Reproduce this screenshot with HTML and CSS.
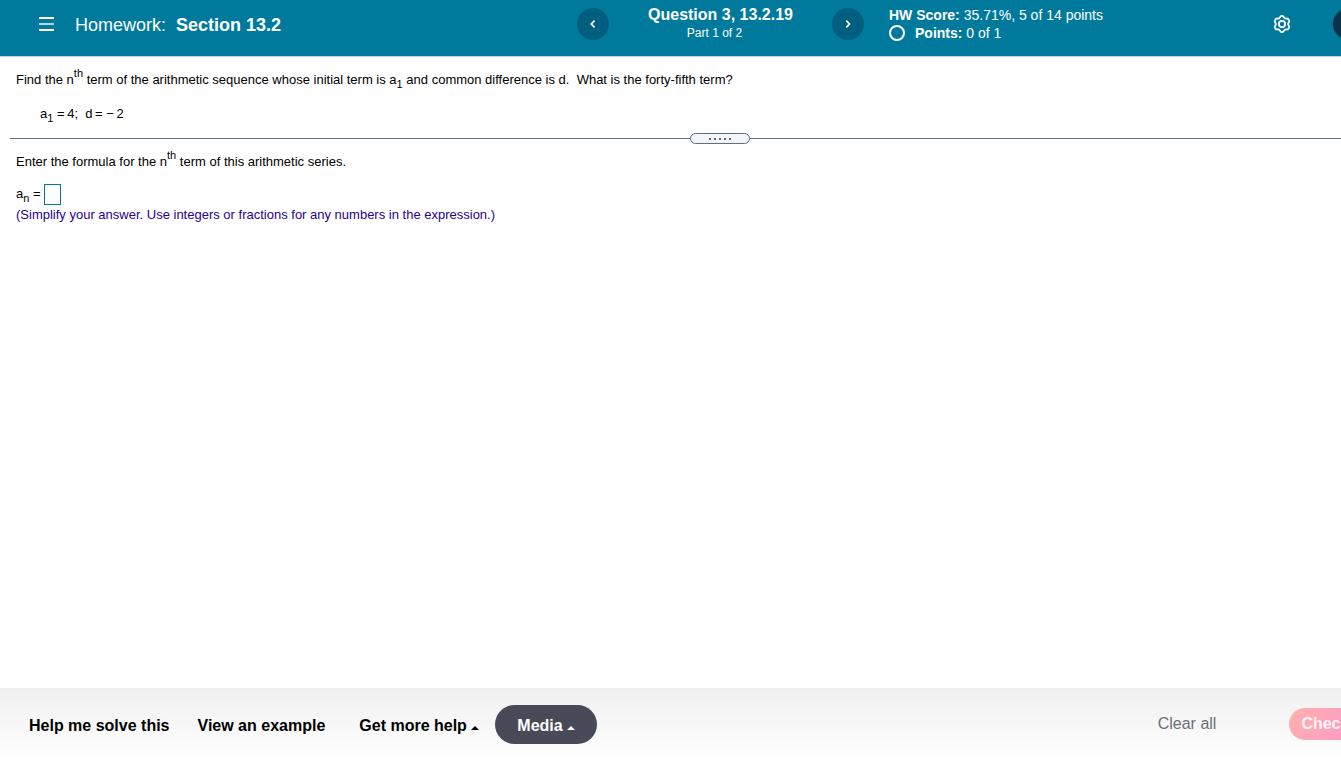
FILE: index.html
```html
<!DOCTYPE html>
<html lang="en">
<head>
  <meta charset="utf-8">
  <title>Homework: Section 13.2</title>
  <link rel="stylesheet" href="styles.css">
</head>
<body>
  <header class="header">
    <div class="title">
      <button class="icon-button menu" aria-label="Menu">
        <svg width="16" height="14" viewBox="0 0 16 14" stroke="#fff" fill="none">
          <path d="M0 1H15M0 13H15" stroke-width="2"/>
          <path d="M0 7H15" stroke-width="1.4"/>
        </svg>
      </button>
      <h1>Homework: <b>Section 13.2</b></h1>
    </div>

    <nav class="question-nav">
      <button class="round" aria-label="Previous question">
        <svg width="8" height="10" viewBox="0 0 8 10" stroke="#fff" stroke-width="1.7" fill="none"><path d="M5.5 1.7L2.3 5L5.5 8.3"/></svg>
      </button>
      <div class="question">
        <h2>Question 3, 13.2.19</h2>
        <p>Part 1 of 2</p>
      </div>
      <button class="round" aria-label="Next question">
        <svg width="8" height="10" viewBox="0 0 8 10" stroke="#fff" stroke-width="1.7" fill="none"><path d="M2.3 1.7L5.5 5L2.3 8.3"/></svg>
      </button>
    </nav>

    <div class="status">
      <div class="score">
        <p><b>HW Score:</b> 35.71%, 5 of 14 points</p>
        <p class="points"><span class="ring"></span><span><b>Points:</b> 0 of 1</span></p>
      </div>
      <button class="icon-button" aria-label="Settings">
        <svg width="20" height="20" viewBox="0 0 20 20" stroke="#fff" stroke-width="1.8" fill="none" stroke-linejoin="round">
          <path d="M10 1.8Q11.6 1.8 12.1 3.4Q12.7 4.9 14.2 4.6Q16 4.2 16.9 5.9Q17.8 7.4 16.6 8.6Q15.5 10 16.6 11.4Q17.8 12.6 16.9 14.1Q16 15.8 14.2 15.4Q12.7 15.1 12.1 16.6Q11.6 18.2 10 18.2Q8.4 18.2 7.9 16.6Q7.3 15.1 5.8 15.4Q4 15.8 3.1 14.1Q2.2 12.6 3.4 11.4Q4.5 10 3.4 8.6Q2.2 7.4 3.1 5.9Q4 4.2 5.8 4.6Q7.3 4.9 7.9 3.4Q8.4 1.8 10 1.8Z"/>
          <circle cx="10" cy="10" r="3.1"/>
        </svg>
      </button>
      <button class="round save" aria-label="Save"></button>
    </div>
  </header>

  <main class="content">
    <section class="problem">
      <p>Find the n<sup>th</sup> term of the arithmetic sequence whose initial term is a<sub>1</sub> and common difference is d.&nbsp; What is the forty-fifth term?</p>
      <p class="given">a<sub>1</sub> =&#8201;4;&nbsp; d&#8201;=&nbsp;&minus;&#8201;2</p>
    </section>

    <div class="divider">
      <button class="handle" aria-label="Resize panels"><i></i><i></i><i></i><i></i><i></i></button>
    </div>

    <section class="work">
      <p>Enter the formula for the n<sup>th</sup> term of this arithmetic series.</p>
      <div class="answer">
        <label for="answer">a<sub>n</sub> =</label>
        <input id="answer" type="text">
      </div>
      <p class="hint">(Simplify your answer. Use integers or fractions for any numbers in the expression.)</p>
    </section>
  </main>

  <footer class="footer">
    <div class="help">
      <button>Help me solve this</button>
      <button>View an example</button>
      <button class="more">Get more help <span class="caret"></span></button>
      <button class="media">Media <span class="caret"></span></button>
    </div>
    <div class="actions">
      <button class="clear">Clear all</button>
      <button class="check">Check answer</button>
    </div>
  </footer>
</body>
</html>
```
FILE: styles.css
```css
* {
  box-sizing: border-box;
}

html {
  overflow: hidden;
}

body {
  display: flex;
  flex-direction: column;
  min-width: 1440px;
  min-height: 100vh;
  margin: 0;
  background: #fff;
  color: #000;
  font-family: "Liberation Sans", Arial, Helvetica, sans-serif;
  font-size: 13px;
}

h1, h2, p {
  margin: 0;
}

button {
  border: none;
  padding: 0;
  background: none;
  color: inherit;
  font: inherit;
  cursor: pointer;
}

svg {
  display: block;
}

/* header */

.header {
  display: grid;
  grid-template-columns: 1fr 288px 1fr;
  height: 57px;
  background: #007a9c;
  border-bottom: 1px solid #c7d0e0;
  color: #fff;
}

.title {
  display: flex;
  align-items: center;
  gap: 20px;
  padding: 0 0 8px 39px;
}

.title h1 {
  font-size: 18px;
  font-weight: normal;
  line-height: 20px;
  padding-top: 2px;
}

.title h1 b {
  margin-left: 5px;
}

.question-nav {
  display: flex;
  justify-content: space-between;
  padding: 4px 0 0 1px;
}

.question {
  text-align: center;
}

.question h2 {
  font-size: 16px;
  line-height: 20px;
  padding-top: 1px;
}

.question p {
  font-size: 12px;
  line-height: 16px;
  padding-right: 12px;
}

.round {
  display: flex;
  align-items: center;
  justify-content: center;
  width: 32px;
  height: 32px;
  margin-top: 4px;
  border-radius: 50%;
  background: #005f7f;
}

.status {
  display: flex;
  padding: 4px 0 0 25px;
}

.score {
  flex: none;
  width: 383px;
  font-size: 14px;
  line-height: 18px;
  padding-top: 2px;
}

.points {
  display: flex;
  align-items: center;
  gap: 10px;
}

.ring {
  width: 16px;
  height: 16px;
  border: 2px solid #fff;
  border-radius: 50%;
}

.status .icon-button {
  height: 20px;
  margin: 10px 41px 0 0;
}

.save {
  background: #0b3247;
}

/* question */

.content {
  flex: 1;
}

sup, sub {
  position: relative;
  font-size: 11px;
  line-height: 0;
  vertical-align: baseline;
}

sup {
  top: -7px;
}

sub {
  top: 4px;
}

.problem {
  padding: 15px 16px 0;
  line-height: 16px;
}

.given {
  padding: 18px 0 0 24px;
}

.divider {
  display: flex;
  align-items: center;
  height: 11px;
  margin: 11px 10px 0;
}

.divider::before,
.divider::after {
  content: "";
  flex: 1;
  height: 1px;
  background: #5b6f87;
}

.handle {
  display: flex;
  align-items: center;
  justify-content: center;
  gap: 3px;
  width: 60px;
  height: 11px;
  border: 1px solid #5b6f87;
  border-radius: 6px;
  background: #f3f5f8;
}

.handle i {
  width: 2px;
  height: 2px;
  background: #666;
}

.work {
  padding: 10px 16px;
  line-height: 16px;
}

.answer {
  display: flex;
  align-items: center;
  gap: 3px;
  padding-top: 14px;
}

.answer label {
  padding-bottom: 2px;
}

.answer input {
  width: 17px;
  height: 21px;
  padding: 0;
  border: 1px solid #007a9c;
  font: inherit;
}

.hint {
  padding-top: 2px;
  color: #2b008f;
}

/* footer */

.footer {
  display: flex;
  justify-content: space-between;
  height: 72px;
  background: linear-gradient(#f0f0f0, #fff);
  font-size: 16px;
}

.help {
  display: flex;
  align-items: center;
  gap: 28px;
  padding-left: 29px;
  font-weight: bold;
}

.help button {
  height: 39px;
  padding-top: 3px;
}

.help .more {
  margin: 0 -12px 0 6px;
}

.caret {
  display: inline-block;
  margin-bottom: 1px;
  border: 4px solid transparent;
  border-top: none;
  border-bottom-color: currentColor;
}

.help .media {
  padding: 3px 22px 0;
  border-radius: 20px;
  background: #484b57;
  color: #fff;
}

.actions {
  display: flex;
  align-items: center;
  gap: 73px;
  padding-right: 19px;
}

.clear {
  color: #6a7079;
}

.check {
  height: 32px;
  padding: 0 12px;
  border-radius: 16px;
  background: linear-gradient(120deg, #ffb1ac, #ff9dc4 60px);
  color: #fff3f7;
  font-weight: bold;
}
```
